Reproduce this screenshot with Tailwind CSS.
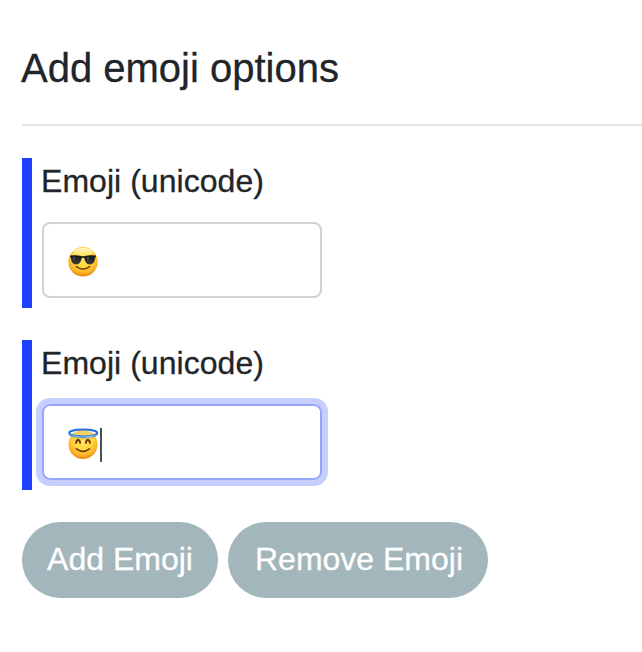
<!DOCTYPE html>
<html lang="en">
<head>
<meta charset="utf-8">
<title>Add emoji options</title>
<script src="https://cdn.jsdelivr.net/npm/@tailwindcss/browser@4"></script>
</head>
<body class="bg-white text-[#212529] font-['Liberation_Sans',Arial,sans-serif] overflow-hidden [-webkit-text-stroke:0.3px]">
<main class="pt-11 pl-[22px]">
  <h1 class="text-[40px] leading-[48px] -ml-px whitespace-nowrap">Add emoji options</h1>
  <hr class="mt-8 border-0 h-0.5 bg-[#e5e5e5]">
  <div class="mt-8 h-[150px] border-l-10 border-[#1d3fff] pl-[10px]">
    <label class="block text-[32px] leading-[46px] -ml-px tracking-[0.04px]">Emoji (unicode)</label>
    <div class="mt-[18px] w-[280px] h-[76px] rounded-lg border-2 border-[#ced4da] flex items-center pl-6">
      <svg class="w-8 h-8 mt-1" viewBox="0 0 32 32" role="img" aria-label="Sunglasses emoji">
        <defs>
          <radialGradient id="face" cx="50%" cy="36%" r="65%">
            <stop offset="0" stop-color="#ffe65c"/><stop offset=".5" stop-color="#ffd640"/><stop offset=".8" stop-color="#fbb325"/><stop offset="1" stop-color="#e5800c"/>
          </radialGradient>
          <linearGradient id="shine" x1="0" y1="0" x2="0" y2="1">
            <stop offset="0" stop-color="#fffbd8"/><stop offset="1" stop-color="#fff3a0" stop-opacity="0.1"/>
          </linearGradient>
          <linearGradient id="lens" x1="0" y1="0" x2="0" y2="1">
            <stop offset="0" stop-color="#121516"/><stop offset="1" stop-color="#383d3e"/>
          </linearGradient>
        </defs>
        <circle cx="15" cy="15.8" r="14.7" fill="url(#face)"/>
        <ellipse cx="15" cy="6.3" rx="10" ry="4.4" fill="url(#shine)"/>
        <path d="M8.5 20.6Q15 25.6 21.5 20.6" fill="none" stroke="#85430d" stroke-width="1.7" stroke-linecap="round"/>
        <path d="M2 9.6Q8 8.6 13 9.9Q15 10.4 17 9.9Q22 8.6 28 9.6L27.8 11.2L27.1 11.8C26.8 16 25.1 18.4 21.8 18.4C18.3 18.4 17 15.8 16.4 12.3Q15 11.2 13.6 12.3C13 15.8 11.7 18.4 8.2 18.4C4.9 18.4 3.2 16 2.9 11.8L2.2 11.2Z" fill="url(#lens)"/>
        <path d="M5 11L7.6 10.7L6.2 15.6Q4.8 14 5 11ZM18.8 11L21.2 10.7L20.2 15.6Q18.8 14 18.8 11Z" fill="#7c8587" opacity=".4"/>
      </svg>
    </div>
  </div>
  <div class="mt-8 h-[150px] border-l-10 border-[#1d3fff] pl-[10px]">
    <label class="block text-[32px] leading-[46px] -ml-px tracking-[0.04px]">Emoji (unicode)</label>
    <div class="mt-[18px] w-[280px] h-[76px] rounded-lg border-2 border-[#96a5ff] ring-[6px] ring-[#c7cfff] flex items-center pl-6">
      <svg class="w-8 h-8 mt-1 shrink-0" viewBox="0 0 32 32" role="img" aria-label="Halo emoji">
        <defs>
          <linearGradient id="halo" x1="0" y1="0" x2="1" y2="0">
            <stop offset="0" stop-color="#3e87e7"/><stop offset=".25" stop-color="#79bdf5"/><stop offset=".5" stop-color="#4f9bee"/><stop offset=".75" stop-color="#8dccfa"/><stop offset="1" stop-color="#3277dc"/>
          </linearGradient>
        </defs>
        <circle cx="15" cy="16.6" r="14.5" fill="url(#face)"/>
        <path d="M2.4 8.4Q15 13 27.6 8.4" fill="none" stroke="#d9901f" stroke-width="1.4" opacity=".45"/>
        <path d="M4 5.2Q15 .8 26 5.2Q15 9.6 4 5.2Z" fill="#f2d36b"/>
        <ellipse cx="15.2" cy="5.1" rx="14" ry="3.5" fill="none" stroke="#276bdc" stroke-width="2"/>
        <path d="M1.3 5.4Q3 9.1 15.2 9.1Q27.4 9.1 29.1 5.4" fill="none" stroke="url(#halo)" stroke-width="1.9"/>
        <path d="M8.1 14.8C8.5 11.1 11.7 11.1 12.1 14.8M17.9 14.8C18.3 11.1 21.5 11.1 21.9 14.8" fill="none" stroke="#6e360d" stroke-width="1.9" stroke-linecap="round"/>
        <path d="M8.5 20.8Q15 25.8 21.5 20.8" fill="none" stroke="#7b3a0d" stroke-width="1.7" stroke-linecap="round"/>
      </svg>
      <span class="w-0.5 h-[34px] bg-[#495057] mt-[6px]"></span>
    </div>
  </div>
  <div class="mt-8 flex gap-[10px] text-white text-[32px] leading-[48px] whitespace-nowrap">
    <button class="w-[196px] h-[76px] rounded-full bg-[#a2b6bb] pb-0.5">Add Emoji</button>
    <button class="w-[260px] h-[76px] rounded-full bg-[#a2b6bb] pb-0.5 pl-0.5">Remove Emoji</button>
  </div>
</main>
</body>
</html>
